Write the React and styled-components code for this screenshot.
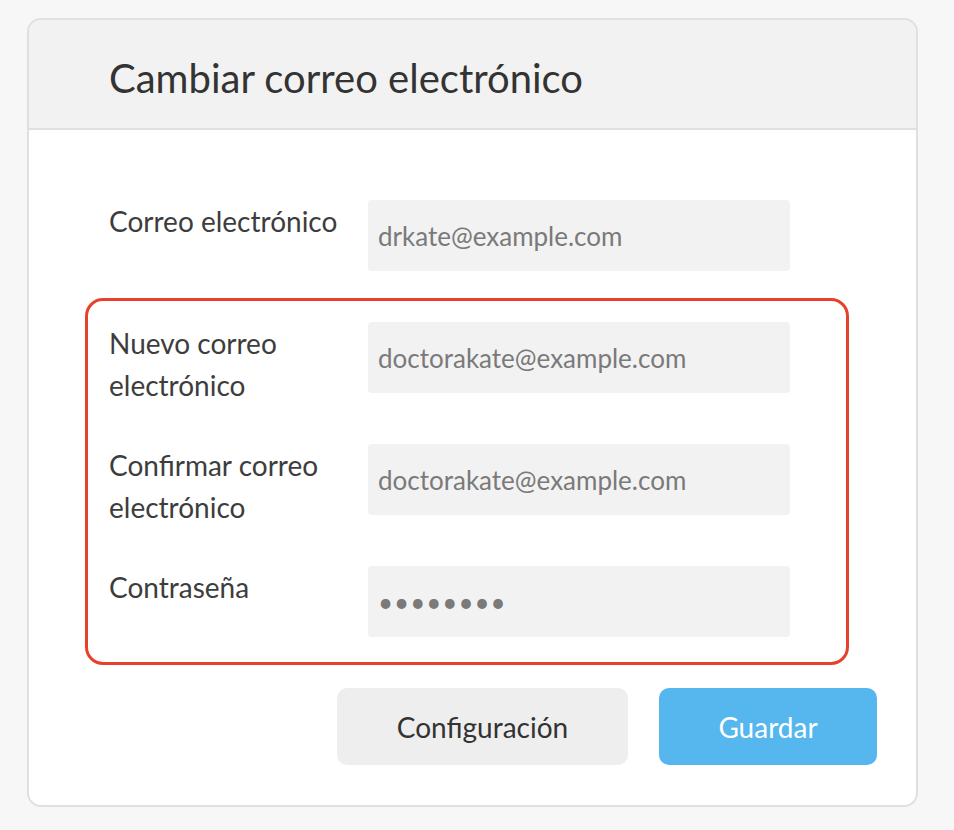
import React from 'react';
import styled, { createGlobalStyle } from 'styled-components';

const GlobalStyle = createGlobalStyle`
  html, body {
    margin: 0;
    background: #f7f7f7;
    font-family: Lato, 'Open Sans', sans-serif;
  }
`;

const Page = styled.div`
  padding: 18px 36px 24px 27px;
`;

const Card = styled.div`
  background: #fff;
  border: 2px solid #e0e0e0;
  border-radius: 14px;
  overflow: hidden;
`;

const Header = styled.div`
  background: #f2f2f2;
  border-bottom: 2px solid #e0e0e0;
  height: 110px;
  display: flex;
  align-items: center;
  padding: 7px 0 0 80px;
  box-sizing: border-box;
`;

const Title = styled.h1`
  margin: 0;
  font-size: 40px;
  font-weight: 400;
  color: #333;
`;

const Body = styled.div`
  padding: 70px 39px 40px 80px;
`;

const Row = styled.div`
  display: flex;
  align-items: flex-start;
  height: 71px;
`;

const Label = styled.label`
  width: 259px;
  padding-right: 20px;
  box-sizing: border-box;
  font-size: 28px;
  line-height: 42px;
  color: #3d3d3d;
`;

const Input = styled.input`
  width: 422px;
  height: 71px;
  border: none;
  border-radius: 4px;
  background: #f2f2f2;
  padding: 0 10px;
  box-sizing: border-box;
  font-family: Lato, 'Open Sans', sans-serif;
  font-size: 26px;
  color: #7a7a7a;
  letter-spacing: ${p => (p.type === 'password' ? '1px' : 'normal')};
  outline: none;
`;

const Highlight = styled.div`
  margin: 27px 0 0 -24px;
  width: 764px;
  box-sizing: border-box;
  border: 3px solid #e8412b;
  border-radius: 18px;
  padding: 21px 0 25px 21px;
  display: flex;
  flex-direction: column;
  gap: 51px;
`;

const Actions = styled.div`
  display: flex;
  justify-content: flex-end;
  gap: 31px;
  margin-top: 23px;
`;

const Button = styled.button`
  height: 77px;
  width: ${p => (p.primary ? '218px' : '291px')};
  border: none;
  border-radius: 10px;
  background: ${p => (p.primary ? '#55b7ee' : '#eeeeee')};
  color: ${p => (p.primary ? '#fff' : '#333')};
  font-family: Lato, 'Open Sans', sans-serif;
  font-size: 28px;
  cursor: pointer;
`;

export default function App() {
  return (
    <Page>
      <GlobalStyle />
      <Card>
        <Header>
          <Title>Cambiar correo electrónico</Title>
        </Header>
        <Body>
          <Row>
            <Label>Correo electrónico</Label>
            <Input readOnly value="drkate@example.com" />
          </Row>
          <Highlight>
            <Row>
              <Label>Nuevo correo electrónico</Label>
              <Input readOnly value="doctorakate@example.com" />
            </Row>
            <Row>
              <Label>Confirmar correo electrónico</Label>
              <Input readOnly value="doctorakate@example.com" />
            </Row>
            <Row>
              <Label>Contraseña</Label>
              <Input readOnly type="password" value="password" />
            </Row>
          </Highlight>
          <Actions>
            <Button>Configuración</Button>
            <Button primary>Guardar</Button>
          </Actions>
        </Body>
      </Card>
    </Page>
  );
}
